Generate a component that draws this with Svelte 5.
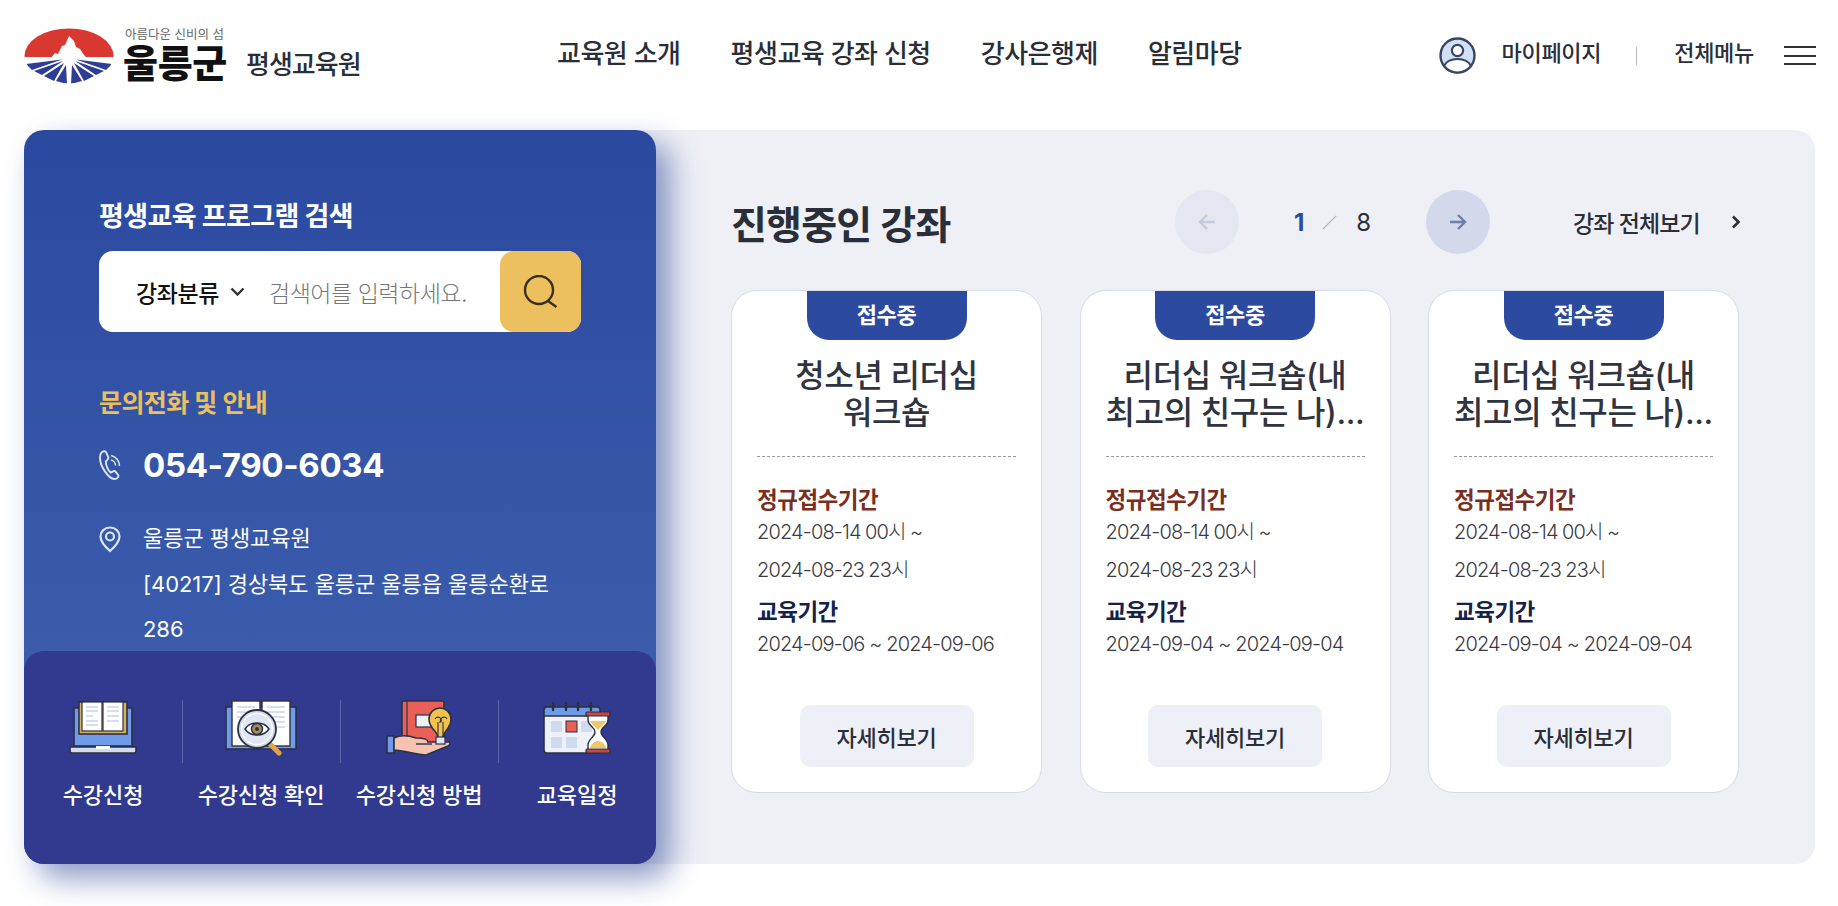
<script>
  const nav = ['교육원 소개', '평생교육 강좌 신청', '강사은행제', '알림마당'];
  const cards = [
    { lines: ['청소년 리더십', '워크숍'], d1: '2024-08-14 00시 ~', d2: '2024-08-23 23시', edu: '2024-09-06 ~ 2024-09-06' },
    { lines: ['리더십 워크숍(내', '최고의 친구는 나)...'], d1: '2024-08-14 00시 ~', d2: '2024-08-23 23시', edu: '2024-09-04 ~ 2024-09-04' },
    { lines: ['리더십 워크숍(내', '최고의 친구는 나)...'], d1: '2024-08-14 00시 ~', d2: '2024-08-23 23시', edu: '2024-09-04 ~ 2024-09-04' }
  ];
</script>

<div class="page">
  <header class="top">
    <div class="logo">
      <svg class="mark" width="90" height="56" viewBox="0 0 90 56">
        <defs><clipPath id="ov"><ellipse cx="45" cy="28" rx="44.5" ry="27.5"/></clipPath></defs>
        <g clip-path="url(#ov)">
          <rect x="0" y="0" width="90" height="31" fill="#d8382f"/>
          <path d="M26 31 L31 25 L34 26 L38 18 L41 17 L45 8 L50 13 L52 19 L56 21 L60 27 L64 31Z" fill="#fff"/>
          <rect x="0" y="29" width="90" height="2.4" fill="#fff"/>
          <path d="M0 31.5 H90 V56 H0Z" fill="#fff"/>
          <path d="M2 36 L38 31.6 L8 42Z M10 43 L39 33 L18 47Z M20 48 L40 35 L30 53Z M32 53 L42 37 L43 56Z M47 56 L48 37 L58 53Z M60 53 L50 35 L70 48Z M72 47 L51 33 L80 43Z M82 42 L52 31.6 L88 36Z" fill="#2e3d96"/>
        </g>
      </svg>
      <div class="logo-name">
        <span class="slogan">아름다운 신비의 섬</span>
        <strong class="gun">울릉군</strong>
      </div>
      <span class="inst">평생교육원</span>
    </div>
    <nav class="gnb">
      {#each nav as n}<a href="#top">{n}</a>{/each}
    </nav>
    <div class="util">
      <svg class="user" width="37" height="37" viewBox="0 0 37 37">
        <circle cx="18.5" cy="18.5" r="17" fill="#cfe0f7" stroke="#3a4660" stroke-width="2.4"/>
        <circle cx="18.5" cy="13.5" r="5.6" fill="#fff" stroke="#3a4660" stroke-width="2.2"/>
        <path d="M5 29 C8 23 13 22 18.5 22 C24 22 29 23 32 29 C28 34 24 35.5 18.5 35.5 C13 35.5 9 34 5 29Z" fill="#fff" stroke="#3a4660" stroke-width="2.2"/>
      </svg>
      <a class="my" href="#top">마이페이지</a>
      <i class="sep"></i>
      <a class="all" href="#top">전체메뉴</a>
      <span class="burger"><b></b><b></b><b></b></span>
    </div>
  </header>

  <main class="board">
    <aside class="side">
      <div class="side-body">
        <h2 class="search-title">평생교육 프로그램 검색</h2>
        <div class="search">
          <span class="cat">강좌분류</span>
          <svg class="chev" width="15" height="10" viewBox="0 0 15 10"><path d="M1.5 1.5 L7.5 7.5 L13.5 1.5" fill="none" stroke="#333" stroke-width="2.4"/></svg>
          <span class="ph">검색어를 입력하세요.</span>
          <span class="go">
            <svg width="36" height="33" viewBox="0 0 36 33"><circle cx="16" cy="15" r="14" fill="none" stroke="#3a2f1a" stroke-width="2.4"/><path d="M25 26 L33.5 32" fill="none" stroke="#3a2f1a" stroke-width="2.4"/></svg>
          </span>
        </div>
        <h3 class="info-title">문의전화 및 안내</h3>
        <div class="tel">
          <svg width="23" height="30" viewBox="0 0 23 30"><path d="M2.5 2.5 C4 1 6 .8 7 2 L9.5 7.5 C9.5 9.5 7.5 10.5 6.8 11.5 C7 15 9 20 11.5 22.5 C13.5 22 14.5 20.5 16 21 L19.5 25.5 C19.5 27.5 17.5 29 15 29 C9 28 1 16 1 8 C1 5.5 1.5 3.5 2.5 2.5Z" fill="none" stroke="#dbe6f8" stroke-width="1.9"/><path d="M12 5.5 C17 6.5 20.5 11 20.5 16 M12 10 C14.5 10.5 16.5 13 16.5 15.5" fill="none" stroke="#dbe6f8" stroke-width="1.6"/></svg>
          <span>054-790-6034</span>
        </div>
        <div class="addr">
          <svg width="22" height="27" viewBox="0 0 22 27"><path d="M11 1.5 C5.5 1.5 1.5 5.5 1.5 10.5 C1.5 16 7 21.5 11 25 C15 21.5 20.5 16 20.5 10.5 C20.5 5.5 16.5 1.5 11 1.5Z" fill="none" stroke="#dbe6f8" stroke-width="2.2"/><circle cx="11" cy="10.5" r="4" fill="none" stroke="#dbe6f8" stroke-width="2.2"/></svg>
          <p>울릉군 평생교육원<br/>[40217] 경상북도 울릉군 울릉읍 울릉순환로 286</p>
        </div>
      </div>
      <div class="quick">
        <a href="#top">
          <svg width="70" height="54" viewBox="0 0 70 54">
            <rect x="6" y="7" width="58" height="38" fill="#6f9be8" stroke="#2b3145" stroke-width="1.6"/>
            <rect x="11" y="1" width="48" height="32" fill="#d9b25e" stroke="#2b3145" stroke-width="1.6"/>
            <rect x="14" y="1" width="20" height="29" fill="#fff" stroke="#2b3145" stroke-width="1.2"/>
            <rect x="35" y="1" width="20" height="29" fill="#fff" stroke="#2b3145" stroke-width="1.2"/>
            <path d="M18 6h12M18 10h12M18 15h7M18 20h12M18 24h12M39 6h12M39 10h12M39 15h12M39 20h12" stroke="#c9d5ee" stroke-width="1.4"/>
            <path d="M2 46 H68 V50 C68 51 67 52 66 52 H4 C3 52 2 51 2 50Z" fill="#d3dcee" stroke="#2b3145" stroke-width="1.6"/>
            <rect x="28" y="45" width="14" height="3" fill="#fff"/>
          </svg>
          <span>수강신청</span>
        </a>
        <a href="#top">
          <svg width="72" height="56" viewBox="0 0 72 56">
            <rect x="1" y="7" width="70" height="42" fill="#6f9be8" stroke="#2b3145" stroke-width="1.6"/>
            <rect x="7" y="1" width="28" height="45" fill="#fff" stroke="#2b3145" stroke-width="1.4"/>
            <rect x="37" y="1" width="28" height="45" fill="#fff" stroke="#2b3145" stroke-width="1.4"/>
            <path d="M12 7h18M12 12h18M12 17h14M42 7h18M42 12h18M42 17h18M42 22h18M42 27h18" stroke="#c9d5ee" stroke-width="1.6"/>
            <path d="M44 43 L54 53" stroke="#e8a33c" stroke-width="5" stroke-linecap="round"/>
            <circle cx="32" cy="29" r="19" fill="#cfdaf0" stroke="#2b3145" stroke-width="1.8"/>
            <circle cx="32" cy="29" r="15.5" fill="#dfe6f5" stroke="#fff" stroke-width="1.5"/>
            <path d="M20 29 C25 21 39 21 44 29 C39 37 25 37 20 29Z" fill="#fff" stroke="#2b3145" stroke-width="1.5"/>
            <circle cx="32" cy="29" r="5.5" fill="#a39158" stroke="#2b3145" stroke-width="1.5"/>
            <circle cx="32" cy="29" r="2" fill="#2b3145"/>
          </svg>
          <span>수강신청 확인</span>
        </a>
        <a href="#top">
          <svg width="66" height="56" viewBox="0 0 66 56">
            <rect x="16" y="1" width="42" height="42" rx="2" fill="#ea5f57" stroke="#2b3145" stroke-width="1.6"/>
            <path d="M21 1 V43" stroke="#2b3145" stroke-width="1.2"/>
            <rect x="30" y="15" width="20" height="12" fill="#eef1f8" stroke="#2b3145" stroke-width="1.2"/>
            <path d="M1 36 H8 V53 H1Z" fill="#6f9be8" stroke="#2b3145" stroke-width="1.6"/>
            <path d="M8 38 C16 34 24 36 30 38 C36 38 42 39 42 42 L63 42 C65 43 64 45 62 46 L40 55 C30 55 18 50 8 50Z" fill="#f6c3b1" stroke="#2b3145" stroke-width="1.6"/>
            <path d="M30 44 H46" stroke="#2b3145" stroke-width="1.4"/>
            <path d="M52 38 C52 31 43 29 43 19 C43 13 48 8 54 8 C60 8 65 13 65 19 C65 29 57 31 57 38Z" fill="#f3c24a" stroke="#2b3145" stroke-width="1.6"/>
            <rect x="50" y="37" width="9" height="7" fill="#dfe6f5" stroke="#2b3145" stroke-width="1.2"/>
            <path d="M52 37 V22 M57 37 V22 M49 19 a3 3 0 0 1 6 3 h-2 M61 19 a3 3 0 0 0 -6 3" fill="none" stroke="#2b3145" stroke-width="1.1"/>
          </svg>
          <span>수강신청 방법</span>
        </a>
        <a href="#top">
          <svg width="70" height="54" viewBox="0 0 70 54">
            <rect x="2" y="6" width="56" height="46" rx="3" fill="#eef1f8" stroke="#2b3145" stroke-width="1.6"/>
            <path d="M2 15 V9 C2 7 3 6 5 6 H55 C57 6 58 7 58 9 V15Z" fill="#6f9be8" stroke="#2b3145" stroke-width="1.6"/>
            <path d="M11 2V9M24 2V9M36 2V9M49 2V9" stroke="#2b3145" stroke-width="2.4" stroke-linecap="round"/>
            <rect x="9" y="20" width="11" height="11" fill="#cfdaf0"/>
            <rect x="24" y="20" width="11" height="11" fill="#ea5f57" stroke="#2b3145" stroke-width="1"/>
            <rect x="39" y="20" width="11" height="11" fill="#cfdaf0"/>
            <rect x="9" y="36" width="11" height="11" fill="#cfdaf0"/>
            <rect x="24" y="36" width="11" height="11" fill="#cfdaf0"/>
            <path d="M46 14 H66 V19 C66 25 59 26 59 31 C59 36 66 38 66 44 V49 H46 V44 C46 38 53 36 53 31 C53 26 46 25 46 19Z" fill="#fff" stroke="#2b3145" stroke-width="1.4"/>
            <path d="M48 20 H64 C62 24 58 26 56 29 C54 26 50 24 48 20Z" fill="#f0c765"/>
            <path d="M48 47 C49 43 53 40 56 40 C59 40 63 43 64 47Z" fill="#f0c765"/>
            <rect x="44" y="11" width="24" height="4" rx="1" fill="#c9473f" stroke="#2b3145" stroke-width="1.2"/>
            <rect x="44" y="48" width="24" height="4" rx="1" fill="#c9473f" stroke="#2b3145" stroke-width="1.2"/>
          </svg>
          <span>교육일정</span>
        </a>
      </div>
    </aside>

    <section class="courses">
      <div class="c-head">
        <h2>진행중인 강좌</h2>
        <div class="pager">
          <span class="circle off"><svg width="20" height="20" viewBox="0 0 20 20"><path d="M18 10H3M10 3L3 10L10 17" fill="none" stroke="#c6ccdd" stroke-width="2.4"/></svg></span>
          <span class="count"><b>1</b><i></i><span>8</span></span>
          <span class="circle on"><svg width="20" height="20" viewBox="0 0 20 20"><path d="M2 10H17M10 3L17 10L10 17" fill="none" stroke="#6f7ea6" stroke-width="2.4"/></svg></span>
        </div>
        <a class="view-all" href="#top">강좌 전체보기
          <svg width="10" height="14" viewBox="0 0 10 14"><path d="M2 1.5L7.5 7L2 12.5" fill="none" stroke="#2a2e38" stroke-width="2.6"/></svg>
        </a>
      </div>
      <div class="cards">
        {#each cards as c}
          <article class="card">
            <span class="badge">접수중</span>
            <h3>{c.lines[0]}<br/>{c.lines[1]}</h3>
            <div class="meta">
              <strong class="reg">정규접수기간</strong>
              <p>{c.d1}</p>
              <p>{c.d2}</p>
              <strong class="edu">교육기간</strong>
              <p class="edu-date">{c.edu}</p>
            </div>
            <a class="more" href="#top">자세히보기</a>
          </article>
        {/each}
      </div>
    </section>
  </main>
</div>

<style>
  :global(body) { margin: 0; background: #fff; }
  .page {
    width: 1838px; height: 906px; overflow: hidden;
    font-family: Inter, "Noto Sans CJK KR", sans-serif; color: #2a2e38;
  }
  a { color: inherit; text-decoration: none; }
  h2, h3, p { margin: 0; }

  .top { height: 130px; display: flex; align-items: flex-start; padding: 0 22px 0 24px; box-sizing: border-box; }
  .logo { display: flex; width: 533px; padding-top: 28px; align-items: flex-start; }
  .mark { flex: none; }
  .logo-name { display: flex; flex-direction: column; margin-left: 9px; }
  .slogan { font-size: 12.5px; line-height: 14px; color: #666; white-space: nowrap; margin-left: 2px; }
  .gun { font-size: 38px; line-height: 36px; margin-top: 3px; font-weight: 900; color: #111; letter-spacing: -0.3px; white-space: nowrap; }
  .inst { font-size: 26px; line-height: 36px; font-weight: 500; margin: 19px 0 0 19px; color: #2a2e38; white-space: nowrap; letter-spacing: -1px; }

  .gnb { display: flex; gap: 50px; padding-top: 36px; font-size: 26px; line-height: 36px; font-weight: 500; white-space: nowrap; letter-spacing: -.5px; }

  .util { margin-left: auto; display: flex; align-items: center; height: 37px; margin-top: 37px; font-size: 22px; line-height: 30px; font-weight: 500; white-space: nowrap; letter-spacing: -.3px; }
  .util a { margin-bottom: 6px; }
  .my { margin-left: 26px; }
  .sep { width: 1px; height: 18px; background: #bbb; margin: 0 37px 0 35px; }
  .burger { display: flex; flex-direction: column; gap: 6.5px; width: 32px; margin-left: 30px; }
  .burger b { display: block; height: 2px; background: #333; }

  .board { margin: 0 23px 0 24px; height: 734px; background: #eef0f6; border-radius: 20px; display: flex; }
  .side {
    width: 632px; flex: none; border-radius: 20px; display: flex; flex-direction: column; overflow: hidden;
    background: linear-gradient(180deg, #2b499f 0%, #4163b0 100%);
    box-shadow: 14px 14px 30px rgba(44, 70, 150, .55); position: relative;
    color: #fff;
  }
  .side-body { flex: 1; padding: 69px 75px 0; min-height: 0; }
  .search-title { font-size: 27px; line-height: 36px; font-weight: 700; letter-spacing: -.6px; }
  .search { display: flex; align-items: center; height: 81px; margin-top: 16px; width: 482px; background: #fff; border-radius: 14px; color: #111; position: relative; }
  .cat { margin-left: 37px; font-size: 23px; font-weight: 500; letter-spacing: -.4px; }
  .chev { margin-left: 11px; flex: none; }
  .ph { margin-left: 24px; font-size: 23px; font-weight: 300; color: #777; letter-spacing: -.5px; white-space: nowrap; }
  .go { margin-left: auto; width: 81px; height: 81px; background: #ecc05e; border-radius: 14px; display: flex; align-items: center; justify-content: center; flex: none; }
  .info-title { font-size: 25px; line-height: 34px; font-weight: 600; color: #ecc05e; margin-top: 54px; letter-spacing: -.6px; }
  .tel { display: flex; align-items: center; gap: 21px; margin-top: 23px; font-size: 33px; line-height: 44px; font-weight: 700; letter-spacing: -.35px; }
  .addr { display: flex; gap: 22px; margin-top: 29px; font-size: 22px; line-height: 45.5px; color: #fff; }
  .addr svg { flex: none; margin-top: 10px; }
  .addr p { width: 414px; letter-spacing: -.05px; }

  .quick { height: 213px; flex: none; background: #313a8e; border-radius: 20px 20px 0 0; display: grid; grid-template-columns: repeat(4, 1fr); padding: 49px 0 0; box-sizing: border-box; position: relative; }
  .quick a { position: relative; display: flex; flex-direction: column; align-items: center; font-size: 22px; font-weight: 500; letter-spacing: -.1px; white-space: nowrap; }
  .quick a svg { height: 56px; flex: none; }
  .quick a span { margin-top: 24px; line-height: 30px; }
  .quick a + a::before { content: ''; position: absolute; left: 0; top: 0; width: 1px; height: 63px; background: #5c65a8; }

  .courses { flex: 1; padding: 56px 0 0 75px; }
  .c-head { display: flex; align-items: center; height: 72px; }
  .c-head h2 { font-size: 39px; font-weight: 600; color: #2a2e38; letter-spacing: -.8px; width: 444px; white-space: nowrap; flex: none; }
  .pager { display: flex; align-items: center; }
  .circle { width: 64px; height: 64px; border-radius: 50%; display: flex; align-items: center; justify-content: center; }
  .off { background: #e4e7f1; }
  .on { background: #d3d9ea; }
  .count { width: 187px; display: flex; align-items: center; font-size: 24px; padding-left: 55px; box-sizing: border-box; }
  .count b { color: #2c4aa0; font-weight: 700; }
  .count i { width: 1px; height: 19px; background: #aaa; transform: rotate(45deg); margin: 0 26px 0 25px; }
  .count span { color: #2a2e38; font-weight: 400; }
  .view-all { display: flex; align-items: center; margin-left: 83px; font-size: 23px; font-weight: 500; letter-spacing: -.9px; white-space: nowrap; }
  .view-all svg { margin-left: 31px; }

  .cards { display: flex; gap: 37.5px; margin-top: 32px; }
  .card {
    width: 311px; height: 503px; box-sizing: border-box; background: #fff; border: 1px solid #d8dbe4; border-radius: 26px;
    padding: 0 25px; display: flex; flex-direction: column; align-items: center; overflow: hidden;
  }
  .badge { width: 160px; height: 49px; flex: none; background: #2c4aa0; color: #fff; border-radius: 0 0 22px 22px; font-size: 22px; font-weight: 600; line-height: 49px; text-align: center; letter-spacing: -.4px; }
  .card h3 { margin-top: 17px; height: 74px; width: 100%; font-size: 32px; line-height: 37px; font-weight: 500; text-align: center; color: #2f3440; white-space: nowrap; letter-spacing: -.4px; padding-bottom: 25px; border-bottom: 1px dashed #999; box-sizing: content-box; }
  .meta { width: 100%; padding-top: 29px; flex: 1; }
  .meta strong { display: block; font-size: 22.5px; line-height: 28px; font-weight: 600; letter-spacing: -.5px; }
  .reg { color: #7a2e1e; }
  .edu { color: #14224a; margin-top: 9px; }
  .meta p { font-size: 20px; line-height: 37.5px; font-weight: 300; color: #3a3a44; letter-spacing: -.85px; word-spacing: -.5px; white-space: nowrap; }
  .meta p.edu-date { word-spacing: 0; }
  .more { width: 174px; height: 62px; flex: none; margin-bottom: 25px; border-radius: 10px; background: #edf0f6; font-size: 22px; font-weight: 500; display: flex; align-items: center; justify-content: center; letter-spacing: -.2px; }
</style>
